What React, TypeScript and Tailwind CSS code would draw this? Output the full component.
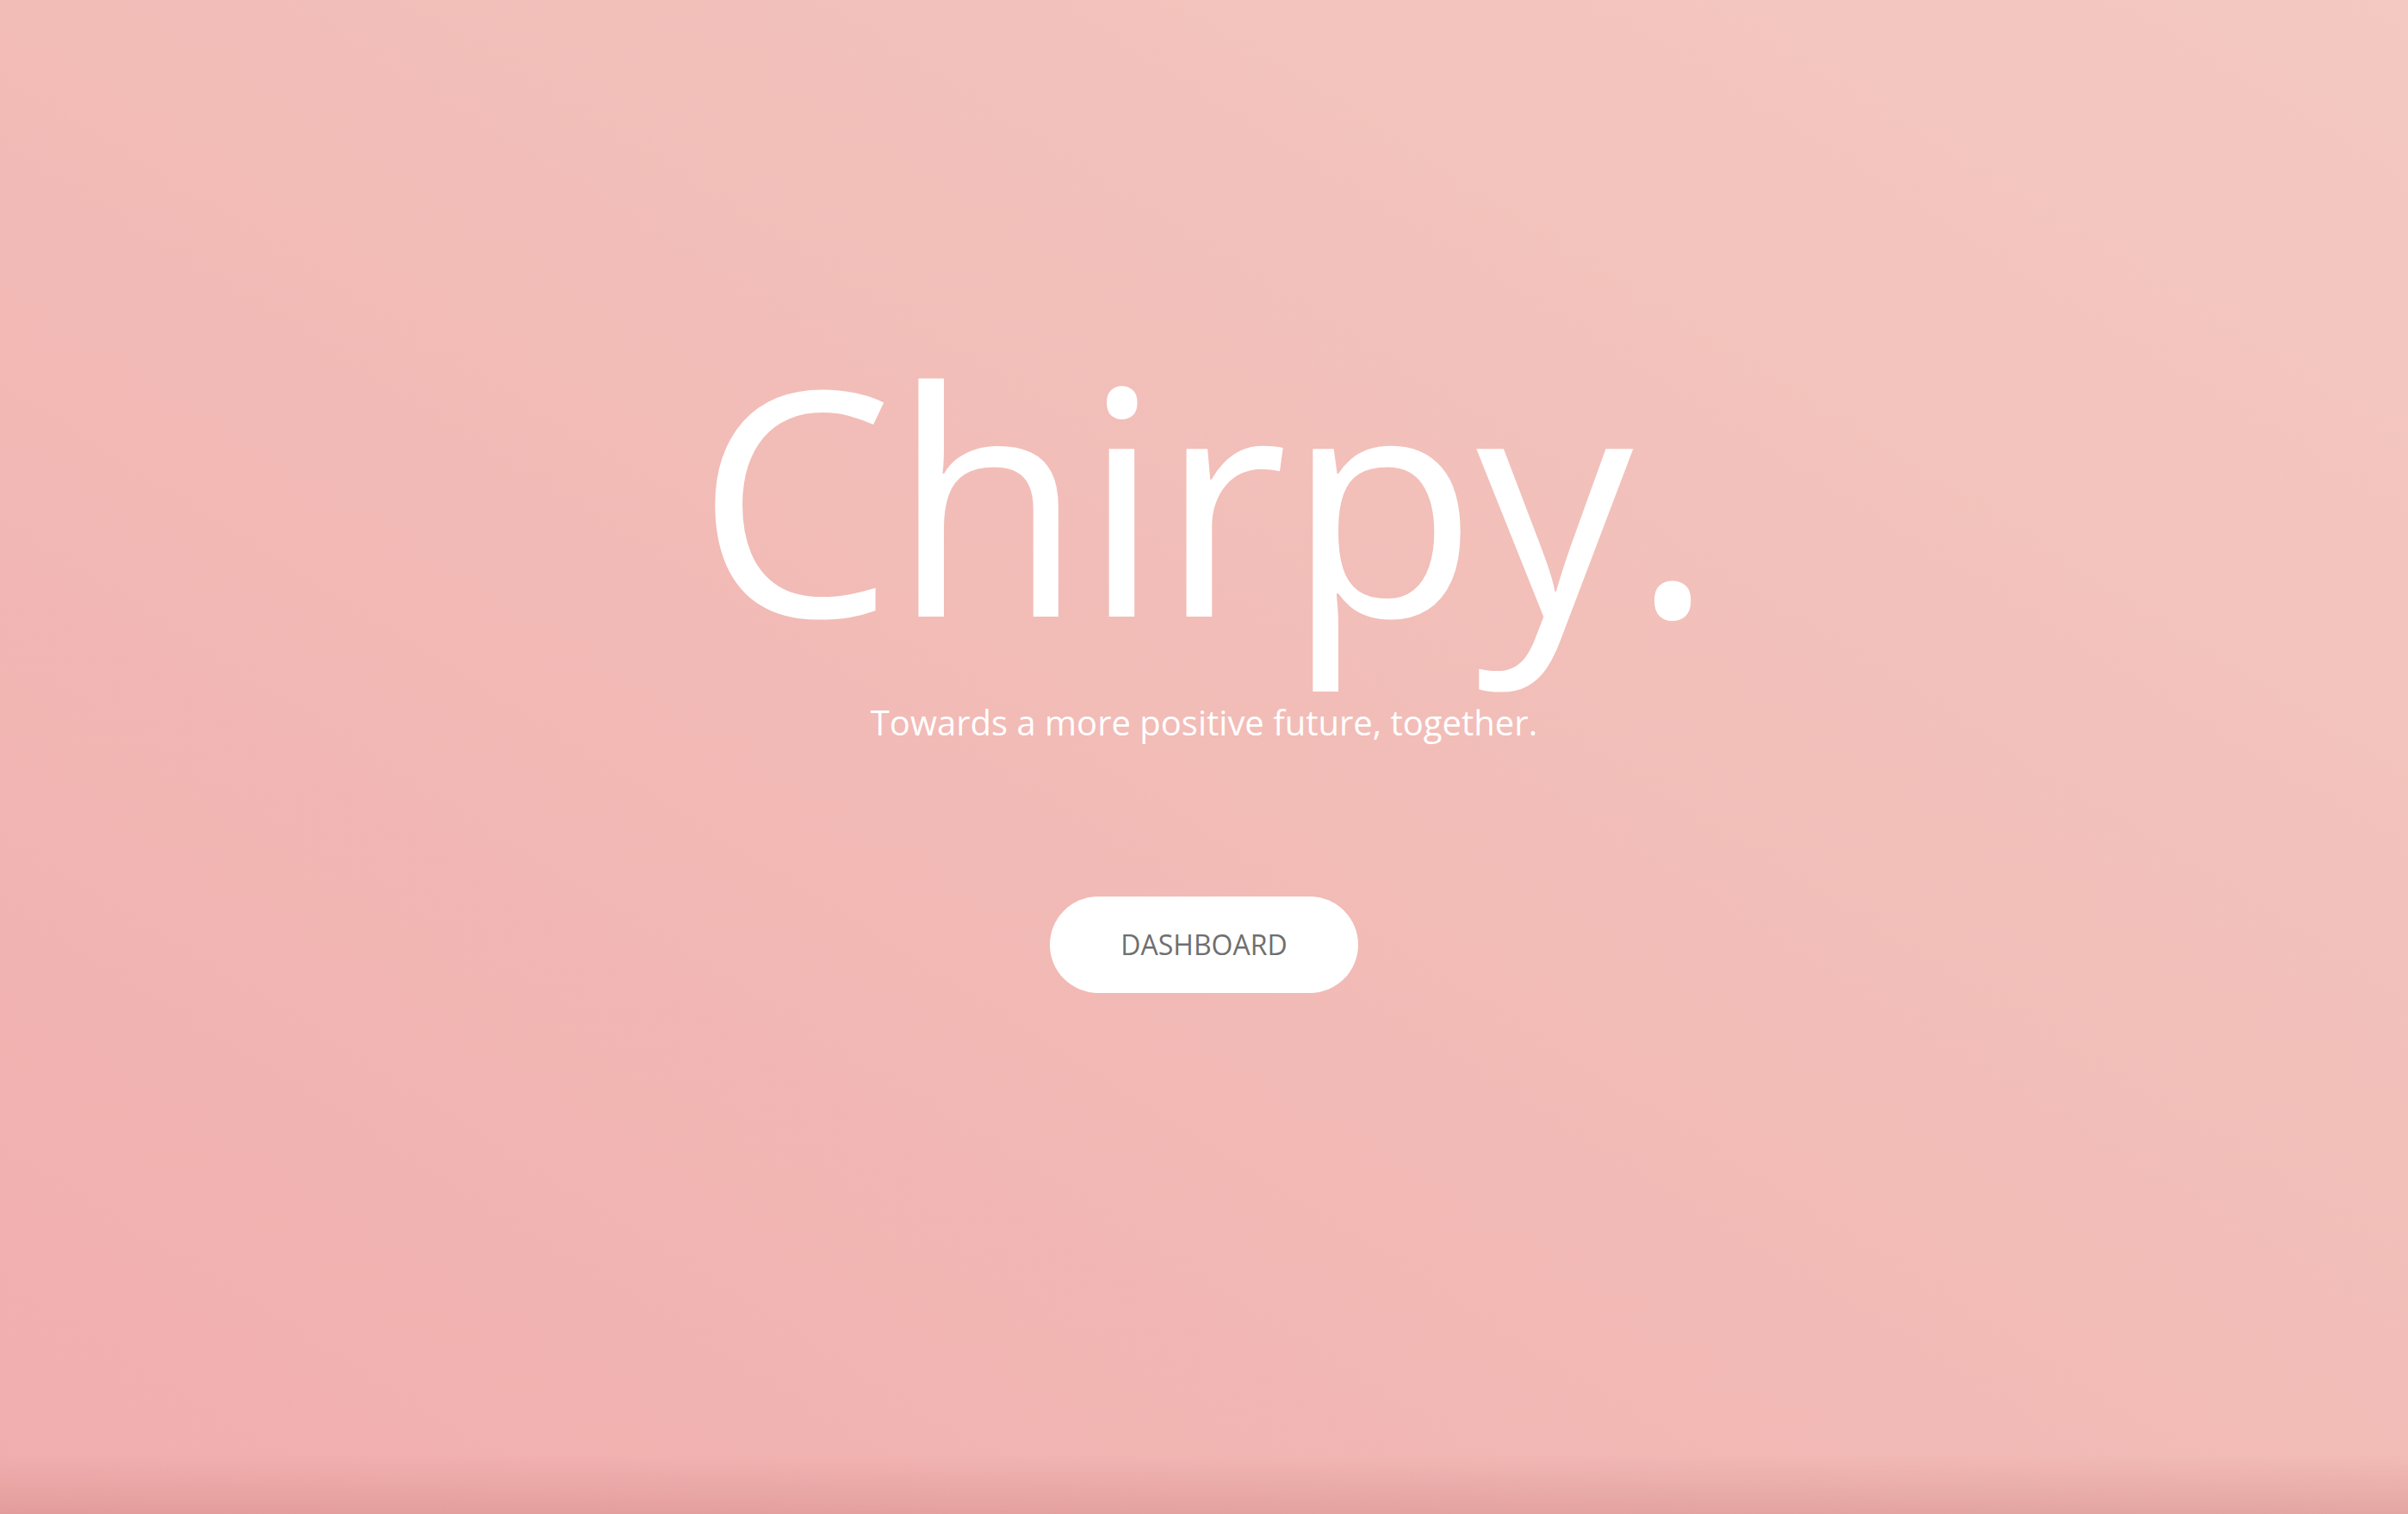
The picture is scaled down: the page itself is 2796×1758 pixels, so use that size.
import React from "react";

export default function App() {
  return (
    <div
      className="relative flex h-[1758px] w-full flex-col items-center overflow-hidden bg-[linear-gradient(to_top,rgba(190,110,110,0.28)_0px,rgba(190,110,110,0)_70px),linear-gradient(to_top_right,#f1aeae_0%,#f2bcb7_50%,#f3c9c1_100%)] pt-[393px] text-white"
      style={{ fontFamily: '"Open Sans", "Noto Sans", sans-serif' }}
    >
      <h1 className="text-[364px] font-normal leading-none tracking-[-2px]">Chirpy.</h1>
      <p className="mt-[62px] text-[40px] leading-none">Towards a more positive future, together.</p>
      <button className="mt-[182px] flex h-[112px] w-[358px] items-center justify-center rounded-full bg-white text-[32px] leading-none text-[#6f6f6f]">
        DASHBOARD
      </button>
    </div>
  );
}
